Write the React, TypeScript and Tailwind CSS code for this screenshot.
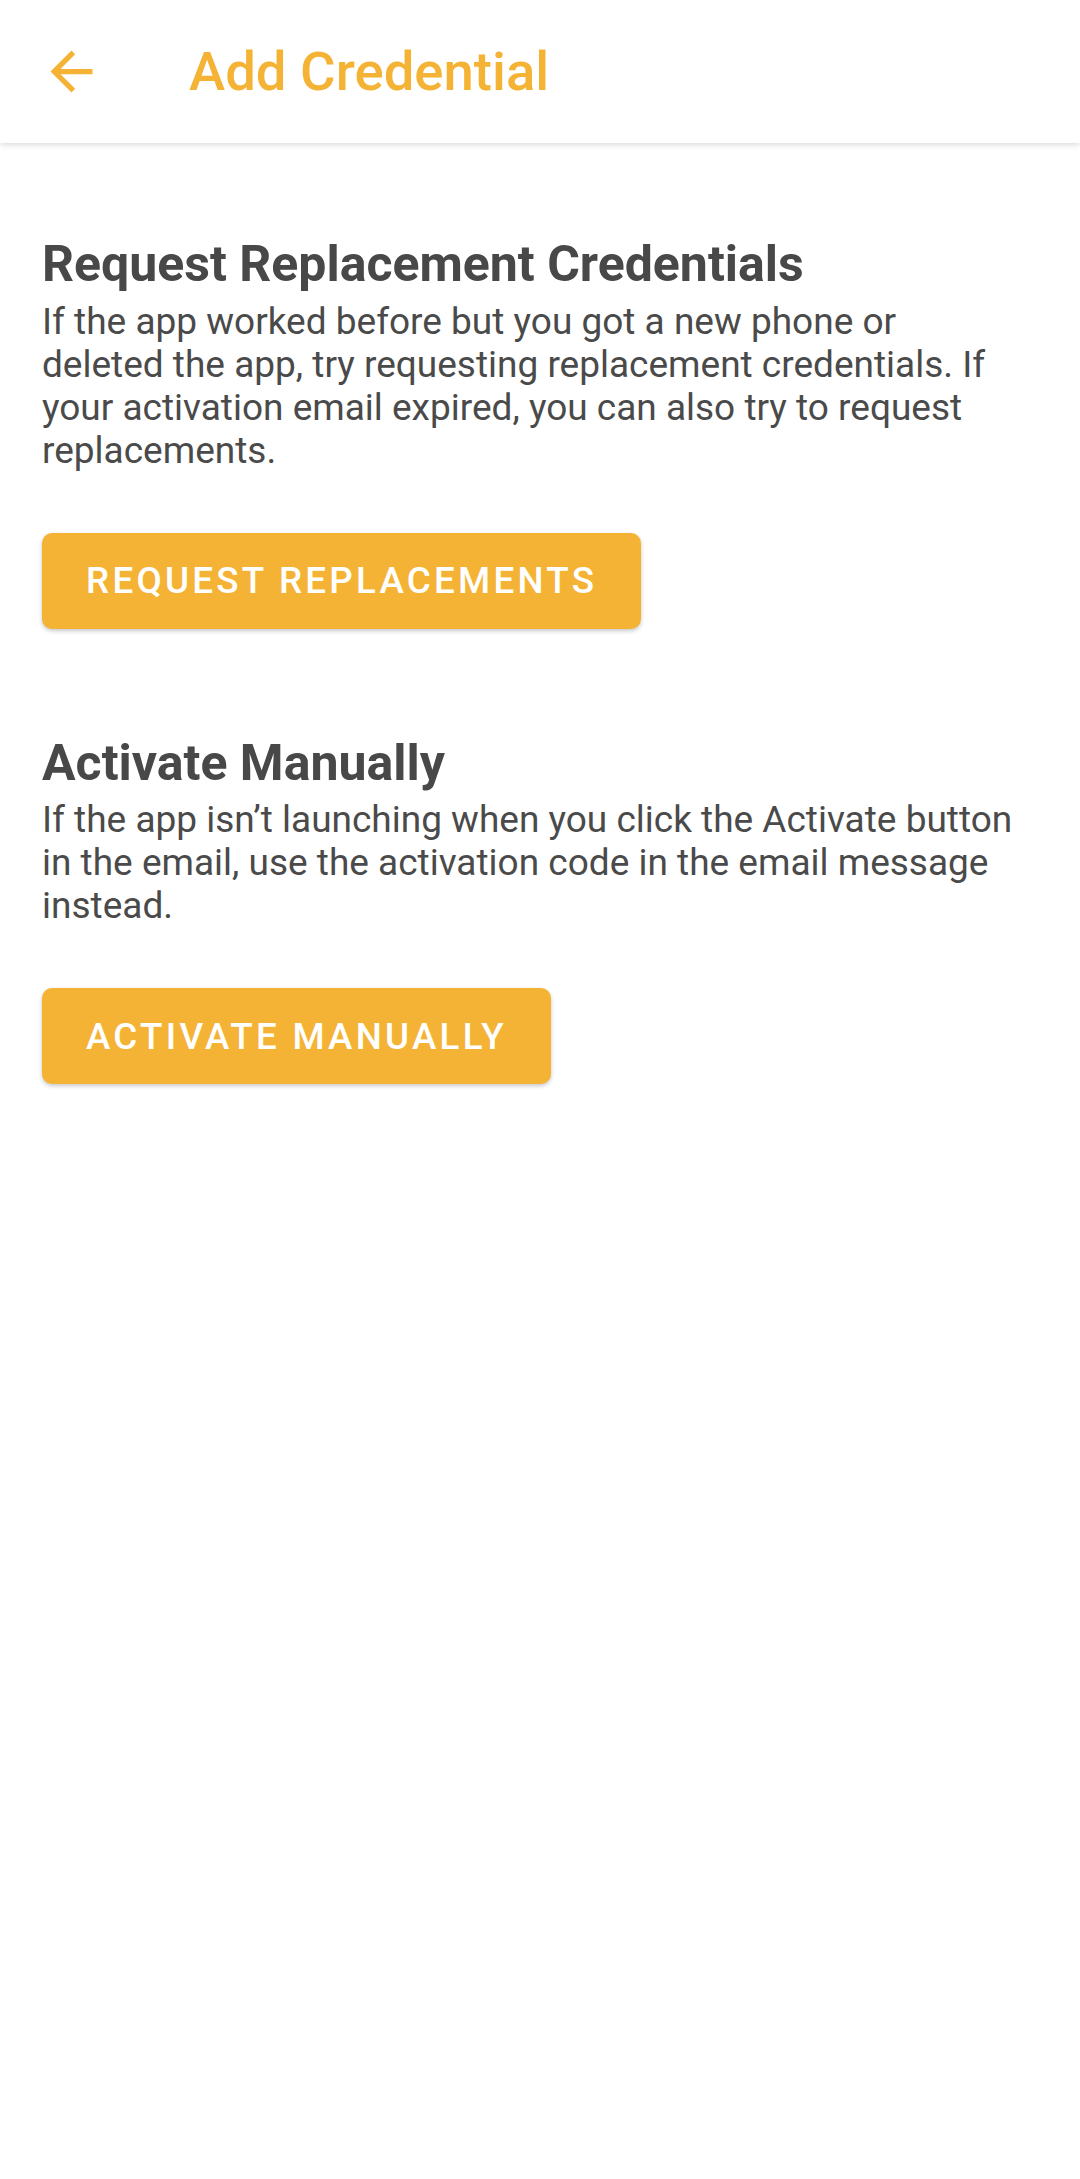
import React from "react";

const sections = [
  {
    title: "Request Replacement Credentials",
    body: "If the app worked before but you got a new phone or deleted the app, try requesting replacement credentials. If your activation email expired, you can also try to request replacements.",
    action: "Request Replacements",
  },
  {
    title: "Activate Manually",
    body: "If the app isn\u2019t launching when you click the Activate button in the email, use the activation code in the email message instead.",
    action: "Activate Manually",
  },
];

export default function App() {
  return (
    <main className="min-h-screen bg-white font-['Roboto',sans-serif]">
      {/* Toolbar */}
      <header className="relative z-10 flex h-[143px] items-center bg-white pl-[40px] shadow-[0_2px_6px_rgba(0,0,0,0.14)]">
        <button className="flex h-[63px] w-[63px] items-center justify-center text-[#f5b335]">
          <svg viewBox="0 0 24 24" className="h-[63px] w-[63px]" fill="currentColor">
            <path d="M20 11H7.83l5.59-5.59L12 4l-8 8 8 8 1.41-1.41L7.83 13H20v-2z" />
          </svg>
        </button>
        <h1 className="ml-[86px] text-[54.5px] font-medium leading-none text-[#f5b335]">
          Add Credential
        </h1>
      </header>

      {/* Content */}
      <div className="flex flex-col pl-[42px] pr-[60px] pt-[92px]">
        {sections.map((s, idx) => (
          <section key={s.title} className={idx > 0 ? "mt-[105px]" : ""}>
            <h2 className="text-[50px] font-bold leading-[58.6px] text-[#484848]">
              {s.title}
            </h2>
            <p className="mt-[6px] text-[37px] leading-[43px] text-[#4a4a4a]">
              {s.body}
            </p>
            <button className="mt-[61px] flex h-[96px] items-center rounded-[10px] bg-[#f5b335] px-[44px] text-[36.75px] font-medium uppercase tracking-[3.25px] text-white shadow-[0_2px_4px_rgba(0,0,0,0.22)]">
              {s.action}
            </button>
          </section>
        ))}
      </div>
    </main>
  );
}
